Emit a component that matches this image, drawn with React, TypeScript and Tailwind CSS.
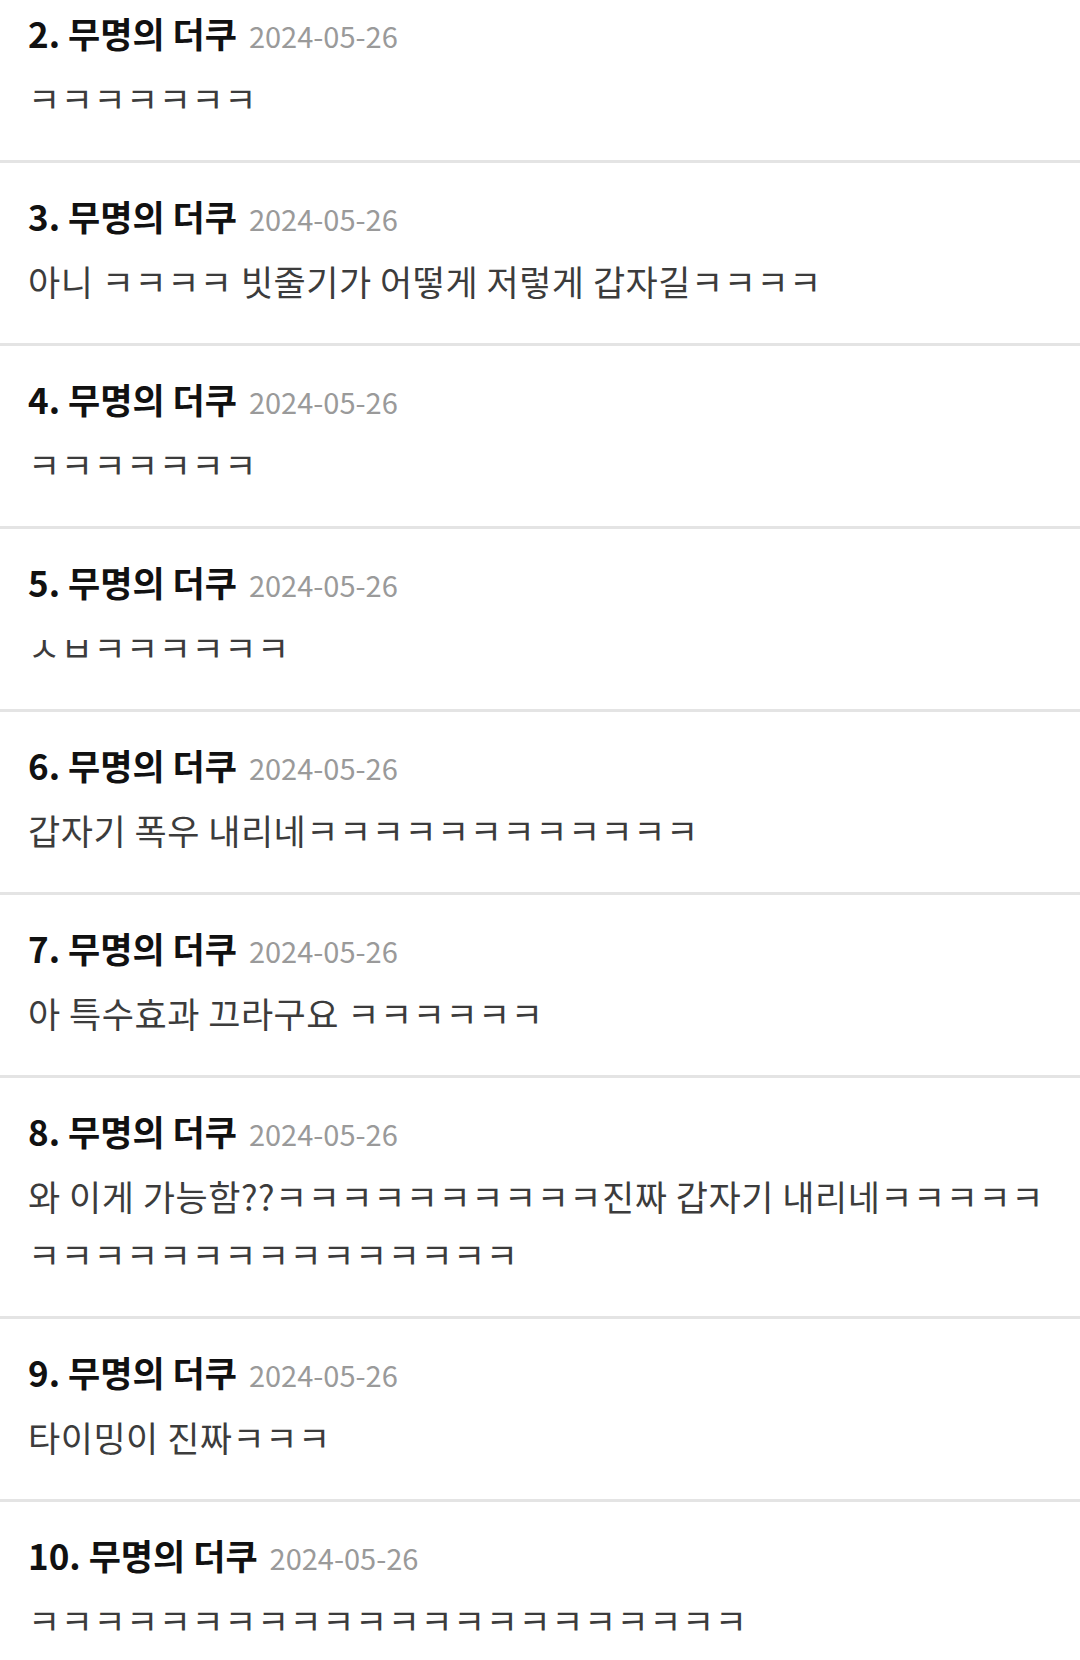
const comments = [
  { no: 2, lines: ["ㅋㅋㅋㅋㅋㅋㅋ"] },
  { no: 3, lines: ["아니 ㅋㅋㅋㅋ 빗줄기가 어떻게 저렇게 갑자길ㅋㅋㅋㅋ"] },
  { no: 4, lines: ["ㅋㅋㅋㅋㅋㅋㅋ"] },
  { no: 5, lines: ["ㅅㅂㅋㅋㅋㅋㅋㅋ"] },
  { no: 6, lines: ["갑자기 폭우 내리네ㅋㅋㅋㅋㅋㅋㅋㅋㅋㅋㅋㅋ"] },
  { no: 7, lines: ["아 특수효과 끄라구요 ㅋㅋㅋㅋㅋㅋ"] },
  {
    no: 8,
    lines: ["와 이게 가능함??ㅋㅋㅋㅋㅋㅋㅋㅋㅋㅋ진짜 갑자기 내리네ㅋㅋㅋㅋㅋ", "ㅋㅋㅋㅋㅋㅋㅋㅋㅋㅋㅋㅋㅋㅋㅋ"],
  },
  { no: 9, lines: ["타이밍이 진짜ㅋㅋㅋ"] },
  { no: 10, lines: ["ㅋㅋㅋㅋㅋㅋㅋㅋㅋㅋㅋㅋㅋㅋㅋㅋㅋㅋㅋㅋㅋㅋ"] },
];

export default function App() {
  return (
    <main
      className="h-[1660px] w-[1080px] overflow-hidden bg-white"
      style={{ fontFamily: '"Noto Sans CJK KR", "Noto Sans", sans-serif' }}
    >
      <ul className="-mt-[20px]">
        {comments.map((c, i) => (
          <li key={c.no}>
            {i > 0 && <div className="h-[3px] bg-[#e4e4e4]" />}
            <div className="px-[28px] pb-[33px] pt-[31px]">
              <p className="h-[44px] whitespace-nowrap leading-[44px] text-[#111]">
                <span className="text-[35px] font-bold">{c.no}. 무명의 더쿠</span>
                <span className="ml-[12px] text-[29px] text-[#9a9a9a]">2024-05-26</span>
              </p>
              <div className="mt-[14px] text-[35px] leading-[58px] tracking-[0.5px] text-[#3c3c3c]">
                {c.lines.map((line) => (
                  <p key={line} className="whitespace-nowrap">
                    {line}
                  </p>
                ))}
              </div>
            </div>
          </li>
        ))}
      </ul>
    </main>
  );
}
